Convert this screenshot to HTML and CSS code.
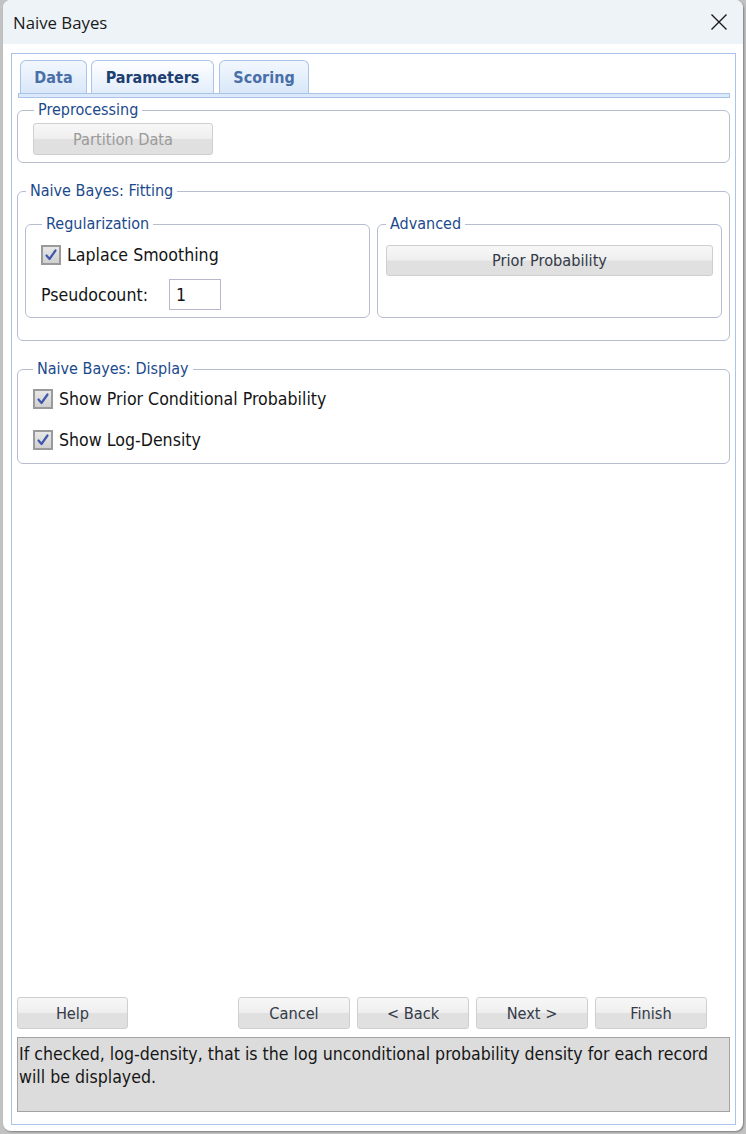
FILE: index.html
```html
<!DOCTYPE html>
<html>
<head>
<meta charset="utf-8">
<link rel="stylesheet" href="styles.css">
</head>
<body>
<div class="window">
  <div class="titlebar">
    <span class="title">Naive Bayes</span>
    <svg class="close" width="18" height="18" viewBox="0 0 18 18"><path d="M1.5 1.5 L16.5 16.5 M16.5 1.5 L1.5 16.5" stroke="#1a1a1a" stroke-width="1.4" fill="none"/></svg>
  </div>
  <div class="body">
    <div class="frame">
      <div class="tabs">
        <div class="tab tab-data">Data</div>
        <div class="tab tab-params active">Parameters</div>
        <div class="tab tab-scoring">Scoring</div>
      </div>
      <div class="band"></div>
      <div class="content">
        <fieldset class="group g-pre">
          <legend class="lg-pre">Preprocessing</legend>
          <button class="btn btn-partition" disabled>Partition Data</button>
        </fieldset>

        <fieldset class="group g-fit">
          <legend class="lg-fit">Naive Bayes: Fitting</legend>
          <div class="fit-row">
            <fieldset class="group g-reg">
              <legend class="lg-reg">Regularization</legend>
              <div class="check-row reg-check">
                <span class="cb"><svg width="14" height="14" viewBox="0 0 14 14"><path d="M2.5 7.5 L5.5 11 L11.5 2.5" stroke="#4358ac" stroke-width="2.2" fill="none" stroke-linecap="round" stroke-linejoin="round"/></svg></span>
                <span class="lbl">Laplace Smoothing</span>
              </div>
              <div class="pseudo-row">
                <span class="lbl pseudo-lbl">Pseudocount:</span>
                <span class="input">1</span>
              </div>
            </fieldset>
            <fieldset class="group g-adv">
              <legend class="lg-adv">Advanced</legend>
              <button class="btn btn-prior">Prior Probability</button>
            </fieldset>
          </div>
        </fieldset>

        <fieldset class="group g-disp">
          <legend class="lg-disp">Naive Bayes: Display</legend>
          <div class="check-row disp-check1">
            <span class="cb"><svg width="14" height="14" viewBox="0 0 14 14"><path d="M2.5 7.5 L5.5 11 L11.5 2.5" stroke="#4358ac" stroke-width="2.2" fill="none" stroke-linecap="round" stroke-linejoin="round"/></svg></span>
            <span class="lbl">Show Prior Conditional Probability</span>
          </div>
          <div class="check-row disp-check2">
            <span class="cb"><svg width="14" height="14" viewBox="0 0 14 14"><path d="M2.5 7.5 L5.5 11 L11.5 2.5" stroke="#4358ac" stroke-width="2.2" fill="none" stroke-linecap="round" stroke-linejoin="round"/></svg></span>
            <span class="lbl">Show Log-Density</span>
          </div>
        </fieldset>

        <div class="spacer"></div>

        <div class="buttons">
          <button class="btn btn-foot btn-help">Help</button>
          <div class="btn-group">
            <button class="btn btn-foot">Cancel</button>
            <button class="btn btn-foot">&lt; Back</button>
            <button class="btn btn-foot">Next &gt;</button>
            <button class="btn btn-foot">Finish</button>
          </div>
        </div>

        <div class="status">If checked, log-density, that is the log unconditional probability density for each record<br>will be displayed.</div>
      </div>
    </div>
  </div>
</div>
</body>
</html>
```

FILE: styles.css
```css
html, body {
  margin: 0;
  padding: 0;
}
body {
  background: #c2c2c2;
  width: 746px;
  height: 1134px;
  overflow: hidden;
  font-family: "DejaVu Sans Condensed", "DejaVu Sans", sans-serif;
}
.window {
  margin-left: 3px;
  width: 740px;
  height: 1131px;
  background: #ffffff;
  border-radius: 8px;
  box-shadow: 1px 1px 2px rgba(0,0,0,0.35);
  display: flex;
  flex-direction: column;
  overflow: hidden;
}
.titlebar {
  height: 44px;
  flex: none;
  background: #eef3f8;
  display: flex;
  align-items: center;
  justify-content: space-between;
  padding: 0 15px 0 10px;
}
.title {
  font-family: "Open Sans", "Noto Sans", sans-serif;
  font-size: 16.8px;
  color: #1a1a1a;
}
.body {
  flex: 1;
  padding: 9px 7px 6px 8px;
  display: flex;
}
.frame {
  flex: 1;
  border: 1px solid #a9c4e8;
  display: flex;
  flex-direction: column;
  padding: 6px 5px 12px 5px;
}
.tabs {
  display: flex;
  height: 33px;
  padding-left: 3px;
  gap: 4px;
}
.tab {
  height: 33px;
  box-sizing: border-box;
  border: 1px solid #a9c4e8;
  border-bottom: none;
  border-radius: 6px 6px 0 0;
  background: linear-gradient(#f3f7fd, #d8e7f9);
  font-weight: bold;
  font-size: 16px;
  color: #4a6fa8;
  display: flex;
  align-items: center;
  justify-content: center;
  padding-top: 1px;
}
.tab.active {
  background: linear-gradient(#ffffff, #e2edfb);
  color: #1e3f72;
}
.tab-data { width: 67px; }
.tab-params { width: 123px; }
.tab-scoring { width: 90px; margin-left: 1px; }
.band {
  height: 3px;
  background: #dce9fa;
  border: 1px solid #a9c4e8;
  margin: 0 0 0 1px;
}
.content {
  flex: 1;
  display: flex;
  flex-direction: column;
  padding: 3px 0 0 0;
}
.group {
  margin: 0;
  padding: 0;
  border: 1px solid #b8bccf;
  border-radius: 6px;
  min-width: 0;
}
.group legend {
  padding: 0 4px;
  font-size: 16px;
  line-height: 18px;
  color: #1b4a8c;
}
.lg-pre { margin-left: 1px; }
.lg-fit { margin-left: 1px; }
.lg-reg { margin-left: 1px; }
.lg-adv { margin-left: 0; }
.lg-disp { margin-left: 0; }

.g-pre {
  height: 62px;
  box-sizing: border-box;
  padding: 4px 15px 0 15px;
}
.btn {
  font-family: "DejaVu Sans Condensed", "DejaVu Sans", sans-serif;
  font-size: 16.2px;
  color: #333a48;
  border: 1px solid #cfcfcf;
  border-radius: 3px;
  background: linear-gradient(#f7f7f7 0%, #efefef 48%, #e0e0e0 52%, #e0e0e0 100%);
  padding: 0;
  height: 32px;
  cursor: default;
}
.btn-partition {
  width: 180px;
  color: #9a9a9a;
}
.g-fit {
  margin-top: 19px;
  height: 159px;
  box-sizing: border-box;
  padding: 15px 7px 0 7px;
}
.fit-row {
  display: flex;
  gap: 7px;
}
.g-reg {
  flex: none;
  width: 345px;
  height: 103px;
  box-sizing: border-box;
  padding: 0 0 0 15px;
}
.g-adv {
  flex: 1;
  height: 103px;
  box-sizing: border-box;
  padding: 12px 8px 0 8px;
}
.btn-prior {
  width: 100%;
  height: 31px;
}
.check-row {
  display: flex;
  align-items: center;
  height: 20px;
}
.cb {
  width: 16px;
  height: 16px;
  border: 2px solid #9a9a9a;
  background: linear-gradient(#e8e8e8, #d0d0d0);
  display: flex;
  align-items: center;
  justify-content: center;
  flex: none;
}
.lbl {
  font-size: 17.6px;
  color: #141414;
  margin-left: 6px;
  white-space: nowrap;
}
.reg-check {
  margin-top: 12px;
}
.pseudo-row {
  display: flex;
  align-items: center;
  margin-top: 14px;
}
.pseudo-lbl {
  margin-left: 0;
  width: 128px;
}
.input {
  width: 52px;
  height: 31px;
  box-sizing: border-box;
  border: 1px solid #b8b8cc;
  font-size: 17.6px;
  color: #141414;
  padding-left: 6px;
  display: flex;
  align-items: center;
}
.g-disp {
  margin-top: 19px;
  height: 104px;
  box-sizing: border-box;
  padding: 11px 0 0 15px;
}
.disp-check2 {
  margin-top: 21px;
}
.spacer {
  flex: 1;
}
.buttons {
  display: flex;
  justify-content: space-between;
  padding-right: 23px;
}
.btn-group {
  display: flex;
  gap: 7px;
}
.btn-foot {
  width: 112px;
  height: 32px;
}
.btn-help {
  width: 111px;
}
.status {
  margin-top: 8px;
  height: 75px;
  box-sizing: border-box;
  border: 1px solid #a3a3a3;
  background: #dcdcdc;
  font-size: 17.6px;
  line-height: 23px;
  color: #161616;
  padding: 5px 4px 0 1px;
  white-space: nowrap;
}
```
